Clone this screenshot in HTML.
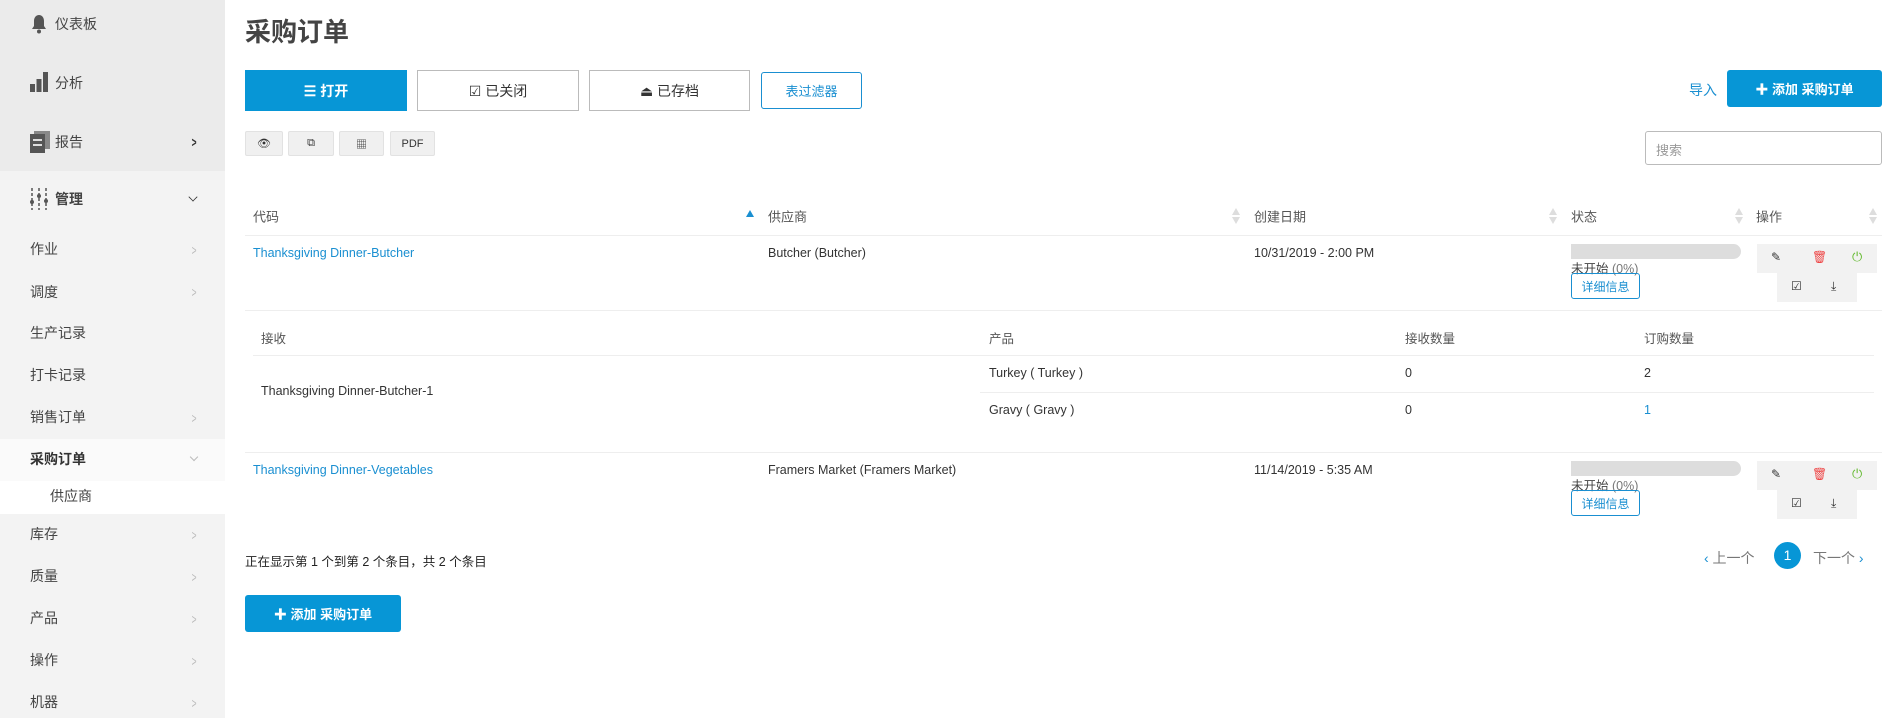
<!DOCTYPE html>
<html><head><meta charset="utf-8"><style>
*{margin:0;padding:0;box-sizing:border-box}
body{width:1902px;height:718px;overflow:hidden;background:#fff;font-family:"Liberation Sans","Noto Sans CJK SC",sans-serif;font-size:12.5px;color:#333;position:relative}
.a{position:absolute;white-space:nowrap}
.sb{position:absolute;left:0;top:0;width:225px;height:718px;background:#f3f3f3}
.sbt{position:absolute;left:0;top:0;width:225px;height:171px;background:#ebebeb}
.si{position:absolute;left:30px;font-size:14px;color:#444;transform:translateY(-50%)}
.chev{position:absolute;left:190px;color:#bbb;font-size:14px;transform:translateY(-50%) scaleX(.6)}
.btn{position:absolute;display:flex;align-items:center;justify-content:center;font-size:14px}
.sm{position:absolute;top:131px;height:25px;background:#f0f0f0;border:1px solid #e2e2e2;border-radius:2px;display:flex;align-items:center;justify-content:center;font-size:11px;color:#333}
.th{position:absolute;top:216px;transform:translateY(-50%);font-size:13px;color:#555}
.line{position:absolute;height:1px;background:#eee}
.lnk{color:#1a8fd1}
.bar{position:absolute;left:1571px;width:170px;height:15px;background:#ddd;border-radius:0 8px 8px 0}
.det{position:absolute;left:1571px;width:69px;height:26px;border:1px solid #1a8fd1;border-radius:3px;color:#1a8fd1;font-size:12px;display:flex;align-items:center;justify-content:center}
.act{position:absolute;background:#f2f2f2}
</style></head><body>
<div class="sb"></div><div class="sbt"></div>
<div class="a" style="left:0;top:439px;width:225px;height:42px;background:#fafafa"></div>
<div class="a" style="left:0;top:481px;width:225px;height:33px;background:#fff"></div>
<svg class="a" style="left:31px;top:14px" width="16" height="20" viewBox="0 0 16 20"><path d="M8 1c-3 0-5 2.5-5 6v5l-2 3h14l-2-3V7c0-3.5-2-6-5-6z" fill="#555"/><circle cx="8" cy="17.5" r="2" fill="#555"/></svg>
<svg class="a" style="left:30px;top:72px" width="18" height="20"><rect x="0" y="12" width="5" height="8" fill="#555"/><rect x="6.5" y="7" width="5" height="13" fill="#555"/><rect x="13" y="0" width="5" height="20" fill="#555"/></svg>
<svg class="a" style="left:30px;top:131px" width="20" height="22"><rect x="4" y="0" width="16" height="18" fill="#888"/><rect x="0" y="3" width="15" height="19" fill="#555"/><rect x="3" y="8" width="9" height="2" fill="#ddd"/><rect x="3" y="13" width="9" height="2" fill="#ddd"/></svg>
<svg class="a" style="left:30px;top:188px" width="18" height="22"><g stroke="#555" stroke-width="1.5" stroke-dasharray="3 2"><path d="M2 0v22M9 0v22M16 0v22"/></g><circle cx="2" cy="14" r="2" fill="#555"/><circle cx="9" cy="8" r="2" fill="#555"/><circle cx="16" cy="13" r="2" fill="#555"/></svg>
<div class="si" style="left:55px;top:24px">仪表板</div>
<div class="si" style="left:55px;top:83px">分析</div>
<div class="si" style="left:55px;top:142px">报告</div>
<div class="chev" style="top:142px;color:#333;font-weight:bold">&gt;</div>
<div class="si" style="left:55px;top:199px;font-weight:bold">管理</div>
<div class="a" style="left:189px;top:193px;width:8px;height:8px;border-right:1.5px solid #333;border-bottom:1.5px solid #333;transform:rotate(45deg) scale(.8)"></div>
<div class="si" style="top:249px">作业</div><div class="chev" style="top:250px">&gt;</div>
<div class="si" style="top:292px">调度</div><div class="chev" style="top:292px">&gt;</div>
<div class="si" style="top:333px">生产记录</div>
<div class="si" style="top:375px">打卡记录</div>
<div class="si" style="top:417px">销售订单</div><div class="chev" style="top:418px">&gt;</div>
<div class="si" style="top:459px;font-weight:bold;color:#333">采购订单</div>
<div class="a" style="left:191px;top:454px;width:6px;height:6px;border-right:1px solid #bbb;border-bottom:1px solid #bbb;transform:rotate(45deg)"></div>
<div class="si" style="left:50px;top:496px">供应商</div>
<div class="si" style="top:534px">库存</div><div class="chev" style="top:535px">&gt;</div>
<div class="si" style="top:576px">质量</div><div class="chev" style="top:577px">&gt;</div>
<div class="si" style="top:618px">产品</div><div class="chev" style="top:619px">&gt;</div>
<div class="si" style="top:660px">操作</div><div class="chev" style="top:661px">&gt;</div>
<div class="si" style="top:702px">机器</div><div class="chev" style="top:703px">&gt;</div>

<div class="a" style="left:245px;top:12px;font-size:26px;font-weight:bold;color:#444">采购订单</div>
<div class="btn" style="left:245px;top:70px;width:162px;height:41px;background:#0796d6;color:#fff;font-weight:bold">☰ 打开</div>
<div class="btn" style="left:417px;top:70px;width:162px;height:41px;border:1px solid #bbb;color:#333">☑ 已关闭</div>
<div class="btn" style="left:589px;top:70px;width:161px;height:41px;border:1px solid #bbb;color:#333">⏏ 已存档</div>
<div class="btn" style="left:761px;top:72px;width:101px;height:37px;border:1px solid #1a8fd1;border-radius:3px;color:#1a8fd1;font-size:13px">表过滤器</div>
<div class="a lnk" style="left:1689px;top:80px;font-size:14px">导入</div>
<div class="btn" style="left:1727px;top:70px;width:155px;height:37px;background:#0796d6;color:#fff;font-weight:bold;font-size:13px;border-radius:3px">✚ 添加 采购订单</div>
<div class="sm" style="left:245px;width:38px">👁</div>
<div class="sm" style="left:288px;width:46px">⧉</div>
<div class="sm" style="left:339px;width:45px">▦</div>
<div class="sm" style="left:390px;width:45px">PDF</div>
<div class="a" style="left:1645px;top:131px;width:237px;height:34px;border:1px solid #bbb;border-radius:3px;padding:8px 10px;color:#999;font-size:13px">搜索</div>

<div class="th" style="left:253px">代码</div>
<svg class="a" style="left:746px;top:210px" width="8" height="7"><path d="M4 0L8 7H0z" fill="#1a8fd1"/></svg>
<div class="th" style="left:768px">供应商</div>
<div class="th" style="left:1254px">创建日期</div>
<div class="th" style="left:1571px">状态</div>
<div class="th" style="left:1756px">操作</div>
<svg class="a" style="left:1232px;top:208px" width="8" height="16"><path d="M4 0L8 7H0zM4 16L8 9H0z" fill="#ddd"/></svg>
<svg class="a" style="left:1549px;top:208px" width="8" height="16"><path d="M4 0L8 7H0zM4 16L8 9H0z" fill="#ddd"/></svg>
<svg class="a" style="left:1735px;top:208px" width="8" height="16"><path d="M4 0L8 7H0zM4 16L8 9H0z" fill="#ddd"/></svg>
<svg class="a" style="left:1869px;top:208px" width="8" height="16"><path d="M4 0L8 7H0zM4 16L8 9H0z" fill="#ddd"/></svg>
<div class="line" style="left:245px;top:235px;width:1637px"></div>

<div class="a lnk" style="left:253px;top:246px">Thanksgiving Dinner-Butcher</div>
<div class="a" style="left:768px;top:246px">Butcher (Butcher)</div>
<div class="a" style="left:1254px;top:246px">10/31/2019 - 2:00 PM</div>
<div class="bar" style="top:244px"></div>
<div class="a" style="left:1571px;top:258px;color:#444">未开始 <span style="color:#777">(0%)</span></div>
<div class="det" style="top:273px">详细信息</div>
<div class="act" style="left:1757px;top:244px;width:120px;height:29px"></div>
<div class="act" style="left:1777px;top:273px;width:80px;height:29px"></div>
<div class="a" style="left:1771px;top:250px;font-size:12px">✎</div>
<div class="a" style="left:1812px;top:250px;font-size:12px;color:#e44">🗑</div>
<div class="a" style="left:1852px;top:249px;font-size:13px;color:#6b3">⏻</div>
<div class="a" style="left:1791px;top:279px;font-size:12px">☑</div>
<div class="a" style="left:1831px;top:279px;font-size:12px">⤓</div>
<div class="line" style="left:245px;top:310px;width:1637px"></div>

<div class="a" style="left:261px;top:328px;color:#555">接收</div>
<div class="a" style="left:989px;top:328px;color:#555">产品</div>
<div class="a" style="left:1405px;top:328px;color:#555">接收数量</div>
<div class="a" style="left:1644px;top:328px;color:#555">订购数量</div>
<div class="line" style="left:253px;top:355px;width:1621px"></div>
<div class="a" style="left:261px;top:384px">Thanksgiving Dinner-Butcher-1</div>
<div class="a" style="left:989px;top:366px">Turkey ( Turkey )</div>
<div class="a" style="left:1405px;top:366px">0</div>
<div class="a" style="left:1644px;top:366px">2</div>
<div class="line" style="left:980px;top:392px;width:894px"></div>
<div class="a" style="left:989px;top:403px">Gravy ( Gravy )</div>
<div class="a" style="left:1405px;top:403px">0</div>
<div class="a lnk" style="left:1644px;top:403px">1</div>
<div class="line" style="left:245px;top:452px;width:1637px"></div>

<div class="a lnk" style="left:253px;top:463px">Thanksgiving Dinner-Vegetables</div>
<div class="a" style="left:768px;top:463px">Framers Market (Framers Market)</div>
<div class="a" style="left:1254px;top:463px">11/14/2019 - 5:35 AM</div>
<div class="bar" style="top:461px"></div>
<div class="a" style="left:1571px;top:475px;color:#444">未开始 <span style="color:#777">(0%)</span></div>
<div class="det" style="top:490px">详细信息</div>
<div class="act" style="left:1757px;top:461px;width:120px;height:29px"></div>
<div class="act" style="left:1777px;top:490px;width:80px;height:29px"></div>
<div class="a" style="left:1771px;top:467px;font-size:12px">✎</div>
<div class="a" style="left:1812px;top:467px;font-size:12px;color:#e44">🗑</div>
<div class="a" style="left:1852px;top:466px;font-size:13px;color:#6b3">⏻</div>
<div class="a" style="left:1791px;top:496px;font-size:12px">☑</div>
<div class="a" style="left:1831px;top:496px;font-size:12px">⤓</div>

<div class="a" style="left:245px;top:551px;color:#222">正在显示第 1 个到第 2 个条目，共 2 个条目</div>
<div class="a" style="left:1704px;top:548px;color:#777;font-size:14px"><span class="lnk">‹</span> 上一个</div>
<div class="a" style="left:1774px;top:542px;width:27px;height:27px;border-radius:50%;background:#0796d6;color:#fff;text-align:center;line-height:27px;font-size:14px">1</div>
<div class="a" style="left:1813px;top:548px;color:#777;font-size:14px">下一个 <span class="lnk">›</span></div>
<div class="btn" style="left:245px;top:595px;width:156px;height:37px;background:#0796d6;color:#fff;font-weight:bold;font-size:13px;border-radius:3px">✚ 添加 采购订单</div>
</body></html>
